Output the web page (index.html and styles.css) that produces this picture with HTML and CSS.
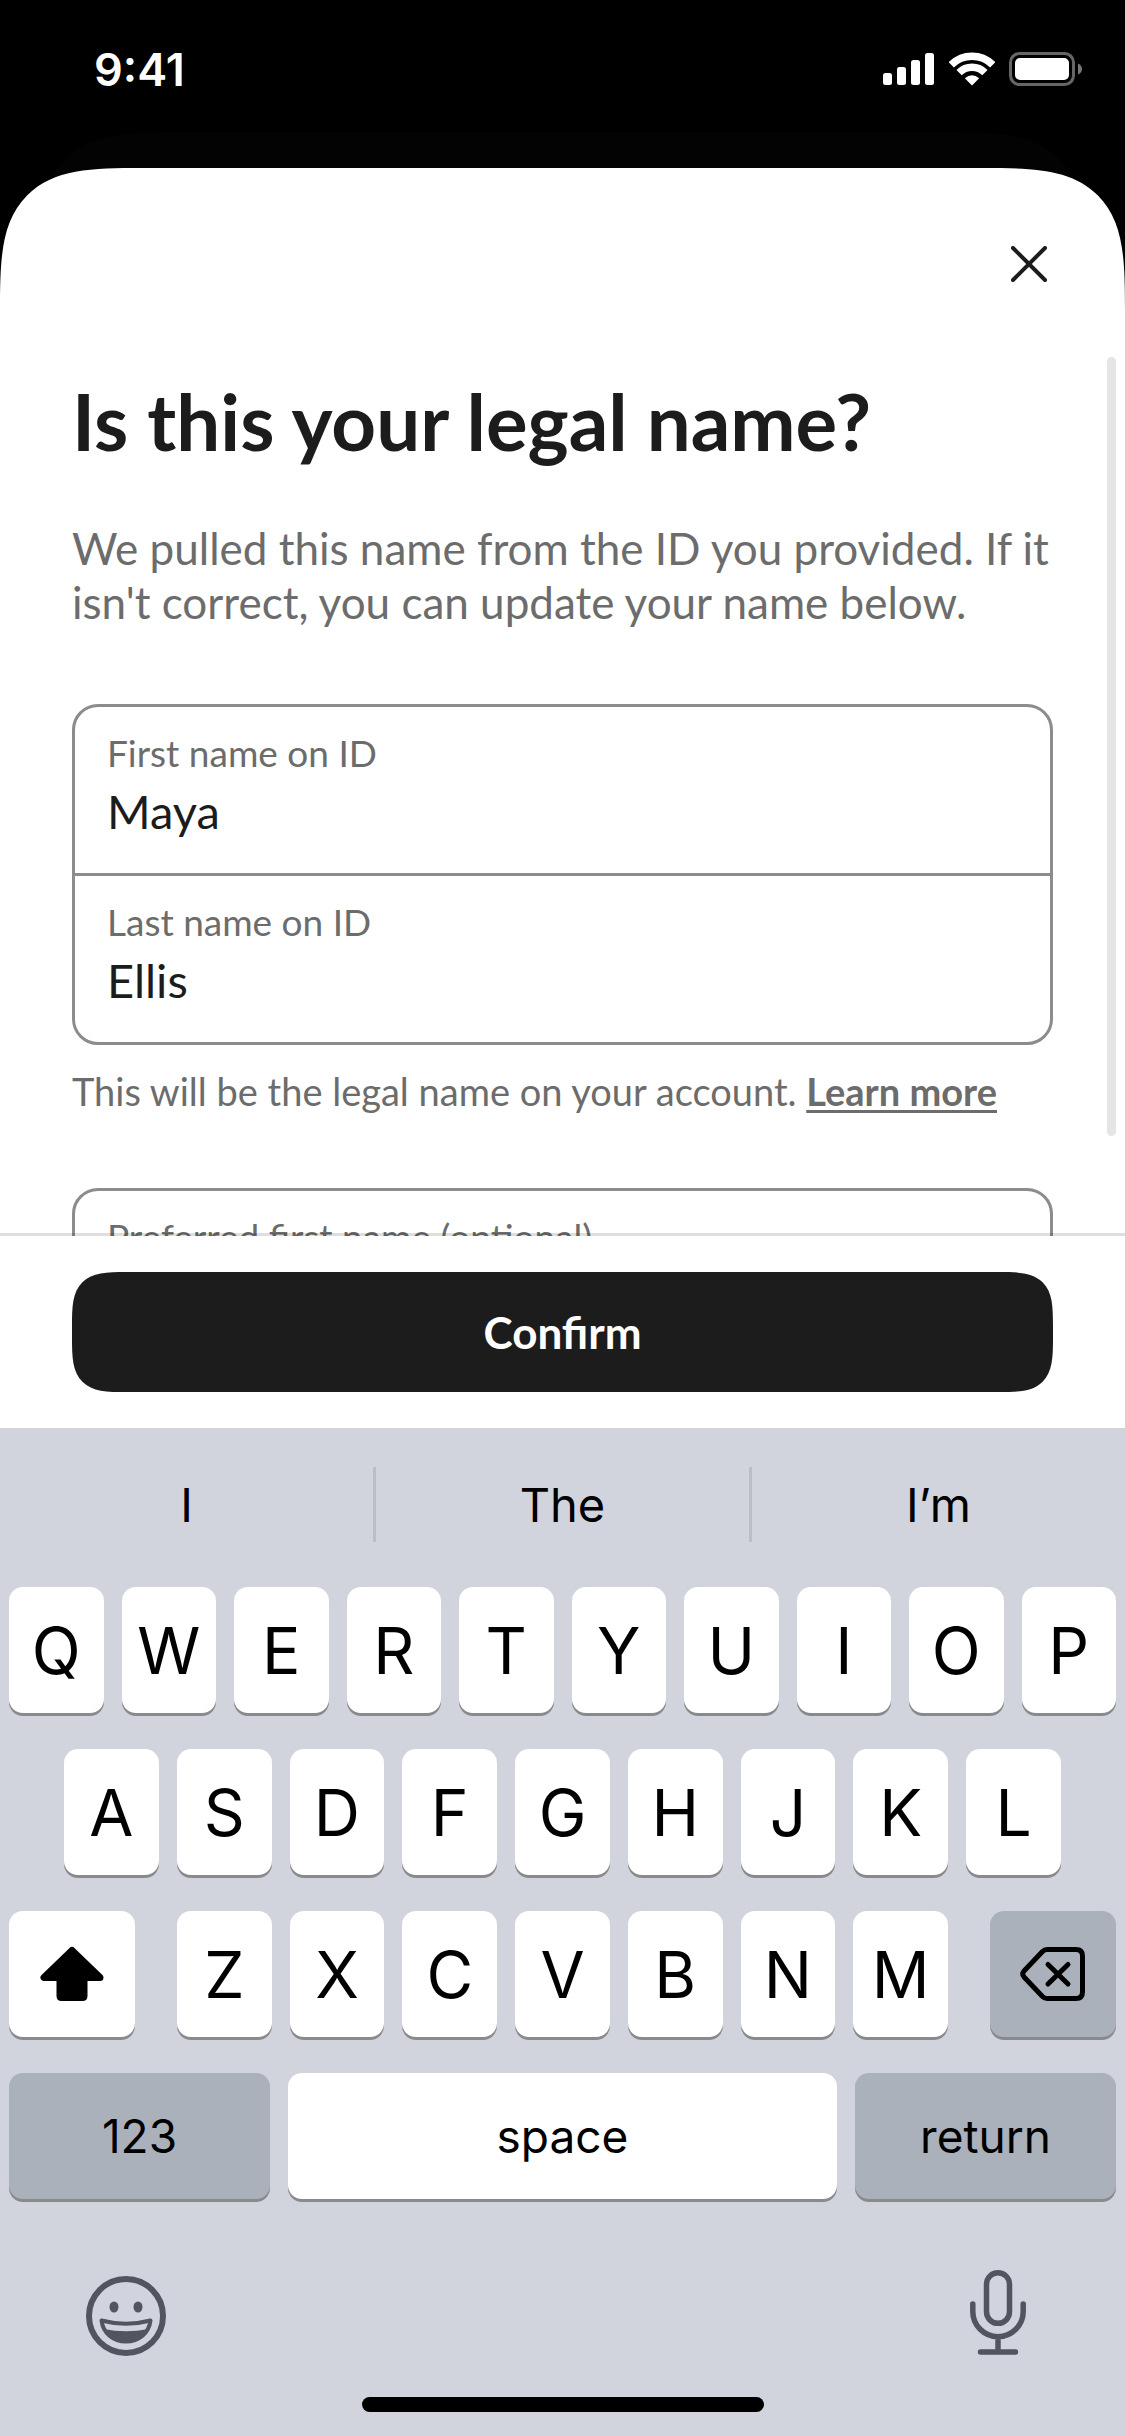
FILE: index.html
```html
<!DOCTYPE html>
<html lang="en">
<head>
<meta charset="utf-8">
<meta name="viewport" content="width=device-width">
<title>Legal name</title>
<link rel="stylesheet" href="styles.css">
</head>
<body>
  <header class="status-bar">
    <span class="time">9:41</span>
    <div class="status-icons">
      <svg width="52" height="34" viewBox="0 0 52 34" fill="#fff">
        <rect x="0" y="21" width="9" height="12" rx="2.5"/>
        <rect x="14" y="15" width="9" height="18" rx="2.5"/>
        <rect x="28" y="8" width="9" height="25" rx="2.5"/>
        <rect x="42" y="1" width="9" height="32" rx="2.5"/>
      </svg>
      <svg width="46" height="34" viewBox="0 0 46 34" fill="none" stroke="#fff" stroke-width="7.4">
        <path d="M2.3 12.8A29.3 29.3 0 0 1 43.7 12.8"/>
        <path d="M10.1 20.6A18.2 18.2 0 0 1 35.9 20.6"/>
        <path d="M23 33.5L15.8 26.3Q23 20 30.2 26.3z" fill="#fff" stroke="none"/>
      </svg>
      <svg width="73" height="34" viewBox="0 0 73 34">
        <rect x="1.5" y="1.5" width="63" height="31" rx="9" fill="none" stroke="#666" stroke-width="3"/>
        <rect x="6" y="6" width="54" height="22" rx="5" fill="#fff"/>
        <path d="M69 11.5q4 2 4 5.500t-4 5.500z" fill="#777"/>
      </svg>
    </div>
  </header>

  <main class="sheet-stack">
    <div class="sheet-behind"></div>
    <div class="sheet">
      <div class="sheet-header">
        <button type="button" class="close" aria-label="Close">
          <svg width="36" height="36" viewBox="0 0 36 36" stroke="#1c1c1c" stroke-width="4" stroke-linecap="round">
            <path d="M2 2l32 32M34 2L2 34"/>
          </svg>
        </button>
      </div>

      <div class="sheet-content">
        <h1>Is this your legal name?</h1>
        <p class="intro">We pulled this name from the ID you provided. If it isn't correct, you can update your name below.</p>

        <div class="field-group">
          <div class="field">
            <label for="first-name">First name on ID</label>
            <input type="text" id="first-name" value="Maya">
          </div>
          <div class="field">
            <label for="last-name">Last name on ID</label>
            <input type="text" id="last-name" value="Ellis">
          </div>
        </div>
        <p class="hint">This will be the legal name on your account. <a href="#">Learn more</a></p>

        <div class="field-group">
          <div class="field">
            <label for="preferred-name">Preferred first name (optional)</label>
            <input type="text" id="preferred-name">
          </div>
        </div>
        <div class="scroll-thumb"></div>
      </div>

      <div class="sheet-footer">
        <button type="button" class="confirm">Confirm</button>
      </div>
    </div>
  </main>

  <section class="keyboard">
    <div class="suggestions">
      <button type="button">I</button>
      <button type="button">The</button>
      <button type="button">I’m</button>
    </div>

    <div class="rows">
      <div class="row">
        <button type="button" class="key">Q</button>
        <button type="button" class="key">W</button>
        <button type="button" class="key">E</button>
        <button type="button" class="key">R</button>
        <button type="button" class="key">T</button>
        <button type="button" class="key">Y</button>
        <button type="button" class="key">U</button>
        <button type="button" class="key">I</button>
        <button type="button" class="key">O</button>
        <button type="button" class="key">P</button>
      </div>
      <div class="row row-middle">
        <button type="button" class="key">A</button>
        <button type="button" class="key">S</button>
        <button type="button" class="key">D</button>
        <button type="button" class="key">F</button>
        <button type="button" class="key">G</button>
        <button type="button" class="key">H</button>
        <button type="button" class="key">J</button>
        <button type="button" class="key">K</button>
        <button type="button" class="key">L</button>
      </div>
      <div class="row row-bottom">
        <button type="button" class="key key-icon" aria-label="Shift">
          <svg width="64" height="56" viewBox="0 0 64 56">
            <path d="M32 4.500L4 31.500H60z" stroke="#000" stroke-width="7" stroke-linejoin="round"/>
            <path d="M16.500 30H47.500V50q0 5-5 5H21.500q-5 0-5-5z"/>
          </svg>
        </button>
        <div class="row letters">
          <button type="button" class="key">Z</button>
          <button type="button" class="key">X</button>
          <button type="button" class="key">C</button>
          <button type="button" class="key">V</button>
          <button type="button" class="key">B</button>
          <button type="button" class="key">N</button>
          <button type="button" class="key">M</button>
        </div>
        <button type="button" class="key key-icon key-dark" aria-label="Delete">
          <svg width="66" height="54" viewBox="0 0 66 54" fill="none" stroke="#000" stroke-width="5" stroke-linecap="round" stroke-linejoin="round">
            <path d="M27 2.500H56q6.500 0 6.500 6.500V45q0 6.500-6.500 6.500H27q-2.500 0-4.500-2L4 30Q1.500 27 4 24L22.500 4.500q2-2 4.500-2z"/>
            <path d="M28 17.500L48 37M48 17.500L28 37"/>
          </svg>
        </button>
      </div>
      <div class="row">
        <button type="button" class="key key-wide key-dark">123</button>
        <button type="button" class="key key-space">space</button>
        <button type="button" class="key key-wide key-dark">return</button>
      </div>
    </div>

    <div class="tools">
      <button type="button" aria-label="Emoji">
        <svg width="80" height="80" viewBox="0 0 80 80" fill="#50555f">
          <circle cx="40" cy="40" r="37" fill="none" stroke="#50555f" stroke-width="6"/>
          <ellipse cx="28" cy="31" rx="4.500" ry="5.500"/>
          <ellipse cx="52" cy="31" rx="4.500" ry="5.500"/>
          <path d="M15.500 44.500Q40 51 64.500 44.500C63 57 53 65.500 40 65.500S17 57 15.500 44.500z" fill="none" stroke="#50555f" stroke-width="4" stroke-linejoin="round"/>
          <path d="M17.500 53Q40 57.500 62.500 53C58 62 50 66 40 66S22 62 17.500 53z"/>
        </svg>
      </button>
      <button type="button" aria-label="Dictate">
        <svg width="56" height="86" viewBox="0 0 56 86" fill="none" stroke="#50555f" stroke-width="5.500" stroke-linecap="round">
          <rect x="16.500" y="2.800" width="23" height="50.500" rx="11.500"/>
          <path d="M2.800 34v7.500a25.200 25.200 0 0 0 50.400 0V34M28 67v15M10.500 82h35"/>
        </svg>
      </button>
    </div>
    <div class="home-indicator"></div>
  </section>
</body>
</html>
```
FILE: styles.css
```css
* {
  box-sizing: border-box;
}
body {
  margin: 0;
  height: 100vh;
  display: flex;
  flex-direction: column;
  background: #000;
  color: #1c1c1c;
  font-family: Lato, "Liberation Sans", sans-serif;
}
button {
  border: none;
  padding: 0;
  background: none;
  color: inherit;
  font-family: inherit;
  cursor: pointer;
}
svg {
  display: block;
}

/* status bar */
.status-bar {
  flex: none;
  height: 138px;
  padding: 0 43px 0 94px;
  display: flex;
  align-items: center;
  justify-content: space-between;
  color: #fff;
}
.time {
  font: 600 45px Inter, "Liberation Sans", sans-serif;
}
.status-icons {
  display: flex;
  gap: 14px;
}

/* sheet */
.sheet-stack {
  flex: 1;
  min-height: 0;
  margin-top: 30px;
  display: flex;
  position: relative;
}
.sheet-behind {
  position: absolute;
  top: -36px;
  left: 38px;
  right: 38px;
  height: 142px;
  background: #030303;
  border-radius: 100px 100px 0 0;
}
.sheet {
  flex: 1;
  display: flex;
  flex-direction: column;
  position: relative;
  background: #fff;
  border-radius: 100px 100px 0 0;
}
.sheet-header {
  flex: none;
  height: 189px;
  padding: 78px 78px 0;
  display: flex;
  justify-content: flex-end;
  align-items: flex-start;
}
.sheet-content {
  flex: 1;
  min-height: 0;
  padding: 17px 72px 0;
  overflow: hidden;
  position: relative;
}
.sheet-content::after {
  content: "";
  position: absolute;
  left: 0;
  right: 0;
  bottom: 0;
  height: 3px;
  background: rgba(0, 0, 0, 0.13);
}
.scroll-thumb {
  position: absolute;
  top: 0;
  right: 9px;
  width: 9px;
  height: 779px;
  border-radius: 5px;
  background: #e5e5e5;
}
h1 {
  margin: 0 0 53px;
  font-size: 78px;
  font-weight: 700;
  line-height: 94px;
}
.intro {
  margin: 0 0 75px;
  font-size: 44px;
  line-height: 54px;
  color: #6c6c6c;
}
.field-group {
  border: 3px solid #8c8c8c;
  border-radius: 26px;
}
.field {
  padding: 24px 32px 34px;
}
.field + .field {
  border-top: 3px solid #8c8c8c;
}
.field label {
  display: block;
  margin-bottom: 8px;
  font-size: 37px;
  line-height: 44px;
  color: #6c6c6c;
}
.field input {
  display: block;
  width: 100%;
  height: 56px;
  padding: 0;
  border: none;
  outline: none;
  background: none;
  color: #1c1c1c;
  font-family: inherit;
  font-size: 47px;
}
.hint {
  margin: 24px 0 75px;
  font-size: 38px;
  line-height: 44px;
  color: #6c6c6c;
}
.hint a {
  color: inherit;
  font-weight: 700;
  text-decoration-thickness: 3px;
  text-underline-offset: 4px;
}
.sheet-footer {
  flex: none;
  padding: 36px 72px;
}
.confirm {
  display: block;
  width: 100%;
  height: 120px;
  border-radius: 36px;
  background: #1c1c1c;
  color: #fff;
  font-size: 44px;
  font-weight: 700;
}

/* smoother corners where the browser knows them */
@supports (corner-shape: squircle) {
  .sheet,
  .sheet-behind {
    border-radius: 142px 142px 0 0;
    corner-shape: superellipse(1.7);
  }
  .confirm {
    border-radius: 54px;
    corner-shape: superellipse(1.7);
  }
}

/* keyboard */
.keyboard {
  flex: none;
  padding-bottom: 24px;
  background: #d1d4dc;
  color: #000;
  font-family: Inter, "Liberation Sans", sans-serif;
}
.suggestions {
  height: 153px;
  margin-bottom: 6px;
  display: flex;
  align-items: center;
}
.suggestions button {
  flex: 1;
  height: 75px;
  font-size: 47px;
}
.suggestions button + button {
  border-left: 3px solid #bbbec6;
}
.rows {
  padding: 0 9px;
  display: flex;
  flex-direction: column;
  gap: 36px;
}
.row {
  display: flex;
  gap: 18px;
}
.row-middle {
  padding: 0 55px;
}
.row-bottom {
  gap: 42px;
}
.letters {
  flex: 1;
}
.key {
  flex: 1;
  height: 126px;
  border-radius: 14px;
  background: #fff;
  box-shadow: 0 3px 0 #898a8d;
  font-size: 64px;
}
.key-icon {
  flex: none;
  width: 126px;
  display: flex;
  align-items: center;
  justify-content: center;
}
.key-dark {
  background: #abb1bb;
}
.key-wide {
  flex: none;
  width: 261px;
  font-size: 46px;
}
.key-space {
  font-size: 46px;
}
.tools {
  margin-top: 71px;
  padding: 0 99px 0 86px;
  display: flex;
  align-items: flex-end;
  justify-content: space-between;
}
.home-indicator {
  width: 402px;
  height: 15px;
  margin: 41px auto 0;
  border-radius: 8px;
  background: #000;
}
```
